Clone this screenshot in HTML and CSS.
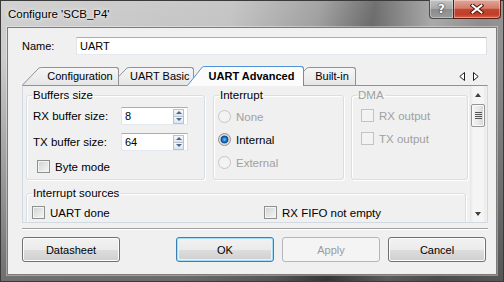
FILE: index.html
```html
<!DOCTYPE html>
<html lang="en">
<head>
    <meta charset="UTF-8">
    <meta name="viewport" content="width=device-width, initial-scale=1.0">
    <title>Configure 'SCB_P4'</title>
    <link rel="stylesheet" href="styles.css">
</head>
<body>
    <div class="window">
        <div class="titlebar">
            <span class="title">Configure 'SCB_P4'</span>
            <div class="caption-buttons">
                <div class="cap-btn help">?</div>
                <div class="cap-btn close">
                    <svg width="14" height="10" viewBox="0 0 14 10">
                        <path d="M2.5 1.5 L11.5 8.5 M11.5 1.5 L2.5 8.5" stroke="#4a1209" stroke-width="4" stroke-linecap="square" fill="none"/>
                        <path d="M2.5 1.5 L11.5 8.5 M11.5 1.5 L2.5 8.5" stroke="#fff" stroke-width="2" stroke-linecap="square" fill="none"/>
                    </svg>
                </div>
            </div>
        </div>

        <div class="client">
            <div class="name-row">
                <label for="name">Name:</label>
                <input type="text" id="name" value="UART">
            </div>

            <div class="tab-row">
                <div class="tab tab-1">
                    <svg class="slant" width="20" height="18">
                        <defs><linearGradient id="g1" x1="0" y1="0" x2="0" y2="1"><stop offset="0" stop-color="#f6f6f6"/><stop offset="1" stop-color="#e6e6e6"/></linearGradient></defs>
                        <path d="M0 18 L16.5 1.5 Q18 0 20 0 L20 18 Z" fill="url(#g1)"/>
                        <path d="M0.5 18 L16.8 1.2 Q18 0.5 20 0.5" fill="none" stroke="#8f9297"/>
                    </svg>
                    <span class="tab-label">Configuration</span>
                </div>
                <div class="tab tab-2">
                    <svg class="slant" width="20" height="18">
                        <defs><linearGradient id="g2" x1="0" y1="0" x2="0" y2="1"><stop offset="0" stop-color="#f6f6f6"/><stop offset="1" stop-color="#e6e6e6"/></linearGradient></defs>
                        <path d="M0 18 L16.5 1.5 Q18 0 20 0 L20 18 Z" fill="url(#g2)"/>
                        <path d="M0.5 18 L16.8 1.2 Q18 0.5 20 0.5" fill="none" stroke="#8f9297"/>
                    </svg>
                    <span class="tab-label">UART Basic</span>
                </div>
                <div class="tab tab-3 active">
                    <svg class="slant" width="18" height="20">
                        <path d="M0 20 L15 1.5 Q16.2 0 18 0 L18 20 Z" fill="#fcfcfc"/>
                        <path d="M0.5 19.5 L15.2 1.2 Q16.2 0.5 18 0.5" fill="none" stroke="#4f95dc"/>
                    </svg>
                    <span class="tab-label">UART Advanced</span>
                </div>
                <div class="tab tab-4">
                    <svg class="slant" width="20" height="18">
                        <defs><linearGradient id="g4" x1="0" y1="0" x2="0" y2="1"><stop offset="0" stop-color="#f6f6f6"/><stop offset="1" stop-color="#e6e6e6"/></linearGradient></defs>
                        <path d="M0 18 L16.5 1.5 Q18 0 20 0 L20 18 Z" fill="url(#g4)"/>
                        <path d="M0.5 18 L16.8 1.2 Q18 0.5 20 0.5" fill="none" stroke="#8f9297"/>
                    </svg>
                    <span class="tab-label">Built-in</span>
                </div>
                <div class="tab-nav">
                    <svg width="6" height="9" viewBox="0 0 6 9"><path d="M5.5 0.5 L0.8 4.5 L5.5 8.5 Z" fill="#fff" stroke="#1e1e1e"/></svg>
                    <svg width="6" height="9" viewBox="0 0 6 9"><path d="M0.5 0.5 L5.2 4.5 L0.5 8.5 Z" fill="#fff" stroke="#1e1e1e"/></svg>
                </div>
            </div>

            <div class="panel">
                <div class="scroll-view">
                    <div class="groups">
                        <fieldset class="group buffers">
                            <legend>Buffers size</legend>
                            <div class="group-body">
                                <div class="field-row">
                                    <span class="field-label">RX buffer size:</span>
                                    <div class="spin">
                                        <span class="spin-value">8</span>
                                        <div class="spin-btns">
                                            <span class="spin-btn up"></span>
                                            <span class="spin-btn down"></span>
                                        </div>
                                    </div>
                                </div>
                                <div class="field-row">
                                    <span class="field-label">TX buffer size:</span>
                                    <div class="spin">
                                        <span class="spin-value">64</span>
                                        <div class="spin-btns">
                                            <span class="spin-btn up"></span>
                                            <span class="spin-btn down"></span>
                                        </div>
                                    </div>
                                </div>
                                <div class="option byte-mode">
                                    <span class="check"></span>
                                    <span>Byte mode</span>
                                </div>
                            </div>
                        </fieldset>

                        <fieldset class="group interrupt">
                            <legend>Interrupt</legend>
                            <div class="group-body">
                                <div class="option disabled"><span class="radio"></span><span>None</span></div>
                                <div class="option"><span class="radio checked"></span><span>Internal</span></div>
                                <div class="option disabled"><span class="radio"></span><span>External</span></div>
                            </div>
                        </fieldset>

                        <fieldset class="group dma disabled">
                            <legend>DMA</legend>
                            <div class="group-body">
                                <div class="option disabled"><span class="check"></span><span>RX output</span></div>
                                <div class="option disabled"><span class="check"></span><span>TX output</span></div>
                            </div>
                        </fieldset>
                    </div>

                    <fieldset class="group sources">
                        <legend>Interrupt sources</legend>
                        <div class="group-body source-grid">
                            <div class="option"><span class="check"></span><span>UART done</span></div>
                            <div class="option"><span class="check"></span><span>RX FIFO not empty</span></div>
                        </div>
                    </fieldset>
                </div>

                <div class="scrollbar">
                    <div class="sb-btn"><span class="arrow-up"></span></div>
                    <div class="thumb">
                        <svg width="7" height="7" viewBox="0 0 7 7"><path d="M0 0.5 H7 M0 2.5 H7 M0 4.5 H7 M0 6.5 H7" stroke="#555"/></svg>
                    </div>
                    <div class="sb-track"></div>
                    <div class="sb-btn"><span class="arrow-down"></span></div>
                </div>
            </div>

            <div class="separator"></div>

            <div class="buttons">
                <button type="button" class="datasheet">Datasheet</button>
                <button type="button" class="default">OK</button>
                <button type="button" disabled>Apply</button>
                <button type="button">Cancel</button>
            </div>
        </div>
    </div>
</body>
</html>
```

FILE: styles.css
```css
* {
    box-sizing: border-box;
}

body {
    margin: 0;
    font-family: "Liberation Sans", Arial, sans-serif;
    font-size: 11px;
    color: #000;
    background: #5a5a5a;
}

.window {
    width: 504px;
    height: 282px;
    display: flex;
    flex-direction: column;
    border: 1px solid #3a3a3a;
    background:
        linear-gradient(to bottom, rgba(255, 255, 255, 0.1) 0%, rgba(0, 0, 0, 0) 20%, rgba(0, 0, 0, 0.45) 100%),
        linear-gradient(100deg, #cdcdcd 0%, #c0c0c0 42%, #9a9a9a 58%, #626262 68%, #a4a4a4 79%, #868686 88%, #9c9c9c 100%);
}

/* title bar */
.titlebar {
    height: 26px;
    display: flex;
    align-items: flex-start;
}

.title {
    padding: 6px 0 0 7px;
    font-size: 11.5px;
    line-height: 15px;
    text-shadow: 0 0 6px rgba(255, 255, 255, 0.9), 0 0 3px rgba(255, 255, 255, 0.8);
}

.caption-buttons {
    display: flex;
    margin-left: auto;
    margin-right: 2px;
    margin-top: -1px;
}

.cap-btn {
    height: 19px;
    display: flex;
    align-items: center;
    justify-content: center;
    border: 1px solid #4a4a4a;
    border-top: none;
    box-shadow: inset 0 0 0 1px rgba(255, 255, 255, 0.35);
}

.help {
    width: 24px;
    border-right: none;
    border-bottom-left-radius: 4px;
    background: linear-gradient(#c4c4c4 0%, #a8a8a8 48%, #8c8c8c 52%, #9a9a9a 100%);
    color: #fff;
    font-family: "DejaVu Sans", sans-serif;
    font-weight: bold;
    font-size: 12px;
    text-shadow: 0 0 2px #333, 0 0 1px #222;
}

.close {
    width: 48px;
    border-bottom-right-radius: 4px;
    background: linear-gradient(#e2a597 0%, #d47d6a 46%, #c24630 52%, #c13d28 80%, #d4654c 100%);
    border-color: #5a1d14;
}

/* client area */
.client {
    flex: 1;
    margin: 0 6px 6px 6px;
    display: flex;
    flex-direction: column;
    padding: 9px 8px 0 14px;
    background: #f0f0f0;
    border: 1px solid #7c7c7c;
    box-shadow: 0 0 0 1px rgba(255, 255, 255, 0.35);
}

.name-row {
    display: flex;
    align-items: center;
    height: 18px;
}

.name-row label {
    width: 54px;
}

.name-row input {
    flex: 1;
    height: 18px;
    margin: 0 1px 0 0;
    padding: 0 3px;
    font-family: "Liberation Sans", Arial, sans-serif;
    font-size: 11px;
    border: 1px solid;
    border-color: #abadb3 #dbdfe6 #e3e9ef #e2e3ea;
    background: #fff;
    outline: none;
}

/* tabs */
.tab-row {
    display: flex;
    align-items: flex-end;
    height: 20px;
    margin-top: 11px;
}

.tab {
    display: flex;
    position: relative;
    margin-bottom: 1px;
}

.tab .slant {
    display: block;
    flex-shrink: 0;
}

.tab-label {
    height: 18px;
    line-height: 17px;
    text-align: center;
    white-space: nowrap;
    border-top: 1px solid #8f9297;
    border-right: 1px solid #8f9297;
    border-top-right-radius: 3px;
    background: linear-gradient(#f6f6f6, #e6e6e6);
}

.tab-1 {
    z-index: 4;
}

.tab-1 .tab-label {
    width: 77px;
}

.tab-2 {
    z-index: 3;
    margin-left: -9px;
}

.tab-2 .tab-label {
    width: 64px;
    padding-right: 6px;
}

.tab-3 {
    margin-left: -7px;
}

.tab-4 {
    z-index: 1;
    margin-left: -14px;
}

.tab-4 .tab-label {
    width: 46px;
    padding-right: 1px;
}

.tab.active {
    z-index: 5;
    margin-bottom: 0;
}

.tab.active .tab-label {
    width: 99px;
    height: 20px;
    padding: 1px 5px 0 0;
    font-weight: bold;
    border-color: #4f95dc;
    background: #fcfcfc;
}

.tab-nav {
    display: flex;
    gap: 8px;
    align-self: flex-start;
    margin: 6px 9px 0 auto;
}

/* tab page */
.panel {
    display: flex;
    height: 138px;
    margin-top: -1px;
    border: 1px solid #d3d9e0;
    border-top-color: #5c9de0;
}

.scroll-view {
    flex: 1;
    overflow: hidden;
    padding: 2px 0 0 3px;
    font-size: 11.5px;
}

.groups {
    display: flex;
}

.group {
    margin: 0;
    padding: 0;
    min-width: 0;
    border: 1px solid #d5dfe5;
    border-radius: 3px;
    box-shadow: inset 1px 1px 0 #fff, 1px 1px 0 #fff;
}

.group legend {
    margin-left: 5px;
    padding: 0 1px;
    line-height: 14px;
}

.buffers {
    width: 179px;
    height: 92px;
}

.interrupt {
    width: 131px;
    height: 92px;
    margin-left: 8px;
}

.dma {
    width: 117px;
    height: 92px;
    margin-left: 7px;
}

.dma legend,
.option.disabled {
    color: #a0a0a0;
}

.buffers .group-body {
    padding: 5px 0 0 6px;
}

.field-row {
    display: flex;
    align-items: center;
    height: 18px;
}

.field-row + .field-row {
    margin-top: 8px;
}

.field-label {
    width: 88px;
}

.spin {
    display: flex;
    align-items: center;
    width: 67px;
    height: 18px;
    padding-left: 3px;
    border: 1px solid;
    border-color: #abadb3 #dbdfe6 #e3e9ef #e2e3ea;
    background: #fff;
}

.spin-value {
    flex: 1;
    font-size: 11px;
}

.spin-btns {
    display: flex;
    flex-direction: column;
    width: 11px;
    margin-right: 3px;
}

.spin-btn {
    display: flex;
    align-items: center;
    justify-content: center;
    height: 8px;
    border: 1px solid #b7c3d1;
    background: linear-gradient(#f6f8fb, #dde4ed);
}

.spin-btn.down {
    height: 7px;
    border-top: none;
}

.spin-btn.up::after {
    content: "";
    border-left: 3px solid transparent;
    border-right: 3px solid transparent;
    border-bottom: 3px solid #4d6790;
}

.spin-btn.down::after {
    content: "";
    border-left: 3px solid transparent;
    border-right: 3px solid transparent;
    border-top: 3px solid #4d6790;
}

.option {
    display: flex;
    align-items: center;
    gap: 5px;
    height: 13px;
    white-space: nowrap;
}

.byte-mode {
    margin: 9px 0 0 4px;
}

.interrupt .group-body {
    padding: 8px 0 0 4px;
}

.interrupt .option + .option {
    margin-top: 10px;
}

.dma .group-body {
    padding: 7px 0 0 9px;
}

.dma .option + .option {
    margin-top: 10px;
}

.sources {
    width: 440px;
    height: 40px;
    margin-top: 6px;
}

.source-grid {
    display: grid;
    grid-template-columns: 232px auto;
    padding: 6px 0 0 5px;
}

.check {
    flex-shrink: 0;
    width: 13px;
    height: 13px;
    border: 1px solid #8e8f8f;
    background: linear-gradient(135deg, #cfd1d4, #f7f7f7);
    box-shadow: inset 0 0 0 1px #f4f4f4;
}

.option.disabled .check {
    border-color: #c3c3c3;
    background: #f3f3f3;
    box-shadow: none;
}

.radio {
    flex-shrink: 0;
    width: 13px;
    height: 13px;
    border-radius: 50%;
    border: 1px solid #8e8f8f;
    background: radial-gradient(circle at 40% 40%, #f8f8f8 0, #d9d9d9 70%, #eeeeee 100%);
}

.option.disabled .radio {
    border-color: #c6c6c6;
    background: #f3f3f3;
}

.radio.checked {
    background: radial-gradient(circle at 50% 50%, #5cc6ff 0, #1a80d2 2px, #0d3f80 3.5px, #c9c9c9 4.2px, #f0f0f0 6px);
}

/* scrollbar */
.scrollbar {
    display: flex;
    flex-direction: column;
    width: 16px;
    margin-right: 1px;
    background: linear-gradient(to right, #e6e6e6, #f5f5f5 20%, #f5f5f5 80%, #e9e9e9);
}

.sb-btn {
    display: flex;
    align-items: center;
    justify-content: center;
    height: 17px;
}

.arrow-up {
    border-left: 3.5px solid transparent;
    border-right: 3.5px solid transparent;
    border-bottom: 4px solid #404040;
}

.arrow-down {
    border-left: 3.5px solid transparent;
    border-right: 3.5px solid transparent;
    border-top: 4px solid #404040;
}

.thumb {
    display: flex;
    align-items: center;
    justify-content: center;
    height: 23px;
    margin: 1px 1px 0 1px;
    border: 1px solid #959595;
    border-radius: 2px;
    background: linear-gradient(to right, #f4f4f4, #e9e9e9 50%, #d6d6d6);
    box-shadow: inset 0 0 0 1px #fbfbfb;
}

.sb-track {
    flex: 1;
}

/* bottom buttons */
.separator {
    height: 2px;
    margin-top: 5px;
    border-top: 1px solid #a0a0a0;
    border-bottom: 1px solid #fff;
}

.buttons {
    display: flex;
    gap: 8px;
    margin: 7px 2px 0 0;
}

button {
    width: 98px;
    height: 25px;
    padding: 0;
    font-family: "Liberation Sans", Arial, sans-serif;
    font-size: 11px;
    color: #000;
    border: 1px solid #707070;
    border-radius: 3px;
    background: linear-gradient(#f2f2f2 0%, #ebebeb 50%, #dddddd 52%, #cfcfcf 100%);
    box-shadow: inset 0 0 0 1px #fcfcfc;
}

button.datasheet {
    margin-right: auto;
}

button.default {
    border-color: #3c7fb1;
    box-shadow: inset 0 0 0 1px #a4dcf7, inset 0 0 0 2px #e4f4fc;
}

button:disabled {
    color: #9c9c9c;
    border-color: #b4b8bb;
    background: #f4f4f4;
    box-shadow: none;
}
```
